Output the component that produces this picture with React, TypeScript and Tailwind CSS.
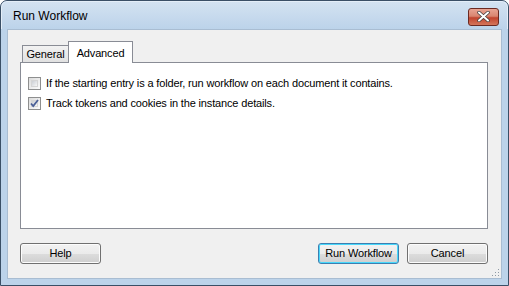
import React from "react";

function Checkbox({ checked }: { checked: boolean }) {
  return (
    <div className="w-[13px] h-[13px] border border-[#8e8f8f] bg-gradient-to-br from-[#dcdcdc] to-[#fbfbfb] p-[2px] flex-none">
      <div className="w-full h-full bg-gradient-to-br from-[#cbcfd5] to-[#f6f6f6] border border-[#d5d5d5] relative">
        {checked && (
          <svg className="absolute -left-[3px] -top-[3px]" width="11" height="11" viewBox="0 0 11 11">
            <path d="M2 5.5 L4.2 8 L9 2" stroke="#4a5f97" strokeWidth="1.8" fill="none" />
          </svg>
        )}
      </div>
    </div>
  );
}

function Button({ label, focused }: { label: string; focused?: boolean }) {
  return (
    <div
      className={`w-[81px] h-[21px] rounded-[3px] border ${
        focused ? "border-[#3c7fb1] shadow-[inset_0_0_0_1px_#48d8fb]" : "border-[#707070] shadow-[inset_0_0_0_1px_#fcfcfc]"
      } bg-[linear-gradient(#f2f2f2_0%,#ebebeb_50%,#dddddd_51%,#cfcfcf_100%)] flex items-center justify-center text-[11px] text-black tracking-[-0.15px]`}
    >
      {label}
    </div>
  );
}

export default function App() {
  return (
    <div
      className="w-[509px] h-[286px] bg-[#bcd3ea] border border-[#3a4f66] rounded-t-[7px] flex flex-col overflow-hidden"
      style={{ fontFamily: '"Liberation Sans", Arial, sans-serif' }}
    >
      <div className="h-[28px] flex-none flex items-center justify-between pl-[11px] pr-[8px] bg-[linear-gradient(#d3e2f1,#bcd3ea)] border-t border-l border-r border-[#e4eef8] rounded-t-[6px]">
        <span className="text-[12px] text-black mt-[1px]">Run Workflow</span>
        <div className="w-[31px] h-[18px] mt-[2px] rounded-[3px] border border-[#6b2a22] bg-[linear-gradient(#e8a493_0%,#d98570_45%,#c1442e_55%,#d4765b_100%)] flex items-center justify-center">
          <svg width="13" height="11" viewBox="0 0 13 11">
            <path d="M2 1.5 L11 9.5 M11 1.5 L2 9.5" stroke="#3d3d3d" strokeWidth="3.4" strokeLinecap="round" />
            <path d="M2 1.5 L11 9.5 M11 1.5 L2 9.5" stroke="#ffffff" strokeWidth="2" strokeLinecap="round" />
          </svg>
        </div>
      </div>
      <div className="flex-1 mx-[6px] mb-[6px] bg-[#f0f0f0] border border-[#a9bdd2] flex flex-col pl-[12px] pr-[13px] pt-[11px]">
        <div className="flex items-end h-[21px] pl-[2px]">
          <div className="w-[47px] h-[17px] border border-b-0 border-[#898c95] bg-[linear-gradient(#f2f2f2,#e1e1e1)] text-[11px] tracking-[-0.15px] flex items-center justify-center text-black">
            General
          </div>
          <div className="w-[65px] h-[22px] -ml-[1px] border border-b-0 border-[#898c95] bg-white text-[11px] tracking-[-0.15px] text-black flex items-start justify-center pt-[3px] relative z-10 -mb-[1px]">
            Advanced
          </div>
        </div>
        <div className="h-[167px] bg-white border border-[#898c95] flex flex-col gap-[7px] pl-[7px] pt-[14px]">
          <div className="flex items-center gap-[5px] text-[11px] tracking-[-0.15px] text-black h-[13px]">
            <Checkbox checked={false} />
            <span>If the starting entry is a folder, run workflow on each document it contains.</span>
          </div>
          <div className="flex items-center gap-[5px] text-[11px] tracking-[-0.15px] text-black h-[13px]">
            <Checkbox checked={true} />
            <span>Track tokens and cookies in the instance details.</span>
          </div>
        </div>
        <div className="flex justify-between items-center mt-[14px]">
          <Button label="Help" />
          <div className="flex gap-[8px]">
            <Button label="Run Workflow" focused />
            <Button label="Cancel" />
          </div>
        </div>
        <div className="flex-1 flex justify-end items-end -mr-[12px] pb-[1px]">
          <svg width="10" height="10" viewBox="0 0 10 10">
            {[
              [8, 2],
              [8, 5],
              [5, 5],
              [8, 8],
              [5, 8],
              [2, 8],
            ].map(([x, y], i) => (
              <rect key={i} x={x} y={y} width="1" height="1" fill="#8f9aa5" />
            ))}
          </svg>
        </div>
      </div>
    </div>
  );
}
